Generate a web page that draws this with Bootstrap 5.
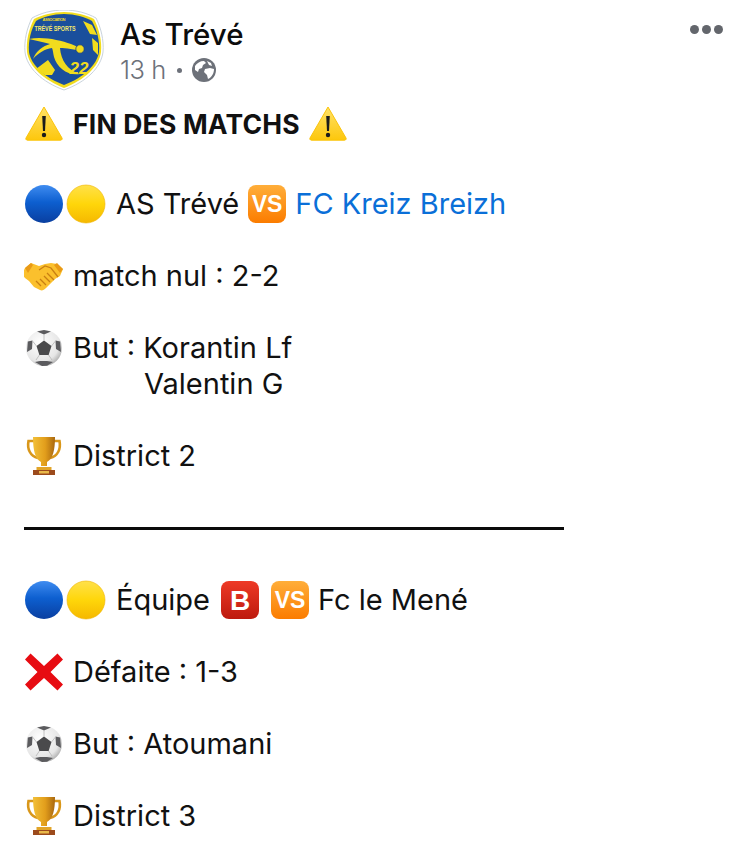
<!DOCTYPE html>
<html lang="fr">
<head>
<meta charset="UTF-8">
<meta name="viewport" content="width=device-width, initial-scale=1.0">
<title>As Trévé</title>
<link href="https://cdn.jsdelivr.net/npm/bootstrap@5.3.0/dist/css/bootstrap.min.css" rel="stylesheet">
<style>
    body {
        background: #fff;
        color: #111;
        font-family: Inter, "Liberation Sans", sans-serif;
        height: 868px;
        overflow: hidden;
    }
    .post-wrap { padding: 10px 24px 0 24px; }
    .post-logo { width: 80px; height: 82px; margin-right: 16px; flex: none; }
    .post-name { font-size: 29.5px; font-weight: 500; line-height: 36px; color: #0c0c0c; margin-top: 6px; }
    .post-meta { font-size: 25.5px; line-height: 32px; color: #6d717a; font-weight: 300; letter-spacing: -.5px; margin-top: 2px; }
    .post-globe { width: 24px; height: 24px; }
    .post-dot { width: 5px; height: 5px; border-radius: 50%; background: #6d717a; margin: 0 10px 0 11px; }
    .post-more { position: absolute; top: 25px; left: 690px; }
    .post-more i { display: block; width: 9px; height: 9px; border-radius: 50%; background: #63666c; margin-right: 3px; }
    .post-body { font-size: 29px; line-height: 36px; font-weight: 400; margin-top: 14px; }
    .post-line { height: 36px; white-space: nowrap; }
    .post-gap { height: 36px; }
    .post-gap-big { height: 44px; }
    .post-title { font-weight: 700; font-size: 26.5px; letter-spacing: .2px; }
    .emo { width: 40px; height: 40px; flex: none; margin-right: 9px; }
    .emo-pair { margin-right: 2px; }
    .emo-second { margin-right: 10px; }
    .emo-in { margin: 0 10px; }
    .emo-vs { margin: 0 8px; }
    .post-link { color: #0a6fd8; text-decoration: none; }
    .post-indent { padding-left: 120px; }
    .post-rule { height: 3px; width: 540px; background: #0b0b0b; }
</style>
</head>
<body>
<svg width="0" height="0" class="d-block">
    <defs>
        <linearGradient id="gBlue" x1="0" y1="0" x2="0" y2="1"><stop offset="0" stop-color="#3f8cf0"/><stop offset=".45" stop-color="#0d5fd0"/><stop offset="1" stop-color="#0a3fa0"/></linearGradient>
        <linearGradient id="gYel" x1="0" y1="0" x2="0" y2="1"><stop offset="0" stop-color="#ffe14a"/><stop offset=".5" stop-color="#ffd60a"/><stop offset="1" stop-color="#f5b800"/></linearGradient>
        <linearGradient id="gOr" x1="0" y1="0" x2="0" y2="1"><stop offset="0" stop-color="#ffae3a"/><stop offset="1" stop-color="#fb7c00"/></linearGradient>
        <linearGradient id="gRed" x1="0" y1="0" x2="0" y2="1"><stop offset="0" stop-color="#ee3a26"/><stop offset="1" stop-color="#bd1a0e"/></linearGradient>
        <linearGradient id="gWarn" x1="0" y1="0" x2="0" y2="1"><stop offset="0" stop-color="#ffe268"/><stop offset="1" stop-color="#fdc70c"/></linearGradient>
        <linearGradient id="gGold" x1="0" y1="0" x2="1" y2="0"><stop offset="0" stop-color="#f2c037"/><stop offset=".55" stop-color="#e29e1c"/><stop offset="1" stop-color="#a9680f"/></linearGradient>
        <radialGradient id="gBall" cx=".4" cy=".35" r=".75"><stop offset="0" stop-color="#fff"/><stop offset=".7" stop-color="#e6e6e6"/><stop offset="1" stop-color="#9a9a9a"/></radialGradient>
        <symbol id="e-blue" viewBox="0 0 40 40"><circle cx="20" cy="20" r="19" fill="url(#gBlue)"/></symbol>
        <symbol id="e-yel" viewBox="0 0 40 40"><circle cx="20" cy="20" r="19" fill="url(#gYel)" stroke="#f0b400" stroke-width=".6"/></symbol>
        <symbol id="e-vs" viewBox="0 0 40 40"><rect x="1" y="1" width="38" height="38" rx="8" fill="url(#gOr)"/><text x="20" y="28" text-anchor="middle" font-family="Liberation Sans, sans-serif" font-weight="700" font-size="23" fill="#fff">VS</text></symbol>
        <symbol id="e-b" viewBox="0 0 40 40"><rect x="1" y="1" width="38" height="38" rx="8" fill="url(#gRed)"/><text x="20" y="30" text-anchor="middle" font-family="Liberation Sans, sans-serif" font-weight="700" font-size="28" fill="#fff">B</text></symbol>
        <symbol id="e-warn" viewBox="0 0 40 40"><path d="M20 3 38 34a1.5 1.5 0 0 1-1.3 2.2H3.3A1.500 1.500 0 0 1 2 34Z" fill="url(#gWarn)" stroke="#fbc40a" stroke-linejoin="round"/><path d="M18.200 12h3.600l-.8 15h-2Z" fill="#1b1b1b"/><circle cx="20" cy="31" r="2.200" fill="#1b1b1b"/></symbol>
        <symbol id="e-ball" viewBox="0 0 40 40"><circle cx="20" cy="20" r="18" fill="url(#gBall)"/><path d="M20 12.500 27.500 18 24.600 27h-9.200L12.500 18Z" fill="#4a4a4c"/><path d="M13 3.500 20 6.500 27 3.500 20 2ZM3.800 13.500 3 24l5-3 .5-8.500ZM36.200 13.500 37 24l-5-3-.5-8.500ZM11 34l7 4 5-.2 6-3.800-6-1h-7Z" fill="#5b5b5e"/><path d="M20 6.500v6M12.500 18 8.500 13M27.500 18l4-5M15.400 27 12 32M24.600 27l3.400 5" stroke="#b5b5b5" stroke-width=".8"/></symbol>
        <symbol id="e-cup" viewBox="0 0 40 40"><path d="M10 5H4.500C3 13 6 20 14 22M30 5h5.500C37 13 34 20 26 22" fill="none" stroke="#d9971a" stroke-width="2.600"/><path d="M9 1h22c0 13-2 22-8 25v4h-6v-4C11 23 9 14 9 1Z" fill="url(#gGold)"/><path d="M12.500 31h15v3h-15Z" fill="#e2a52a"/><path d="M9 34h22v5H9Z" fill="#9c4a1c"/><path d="M15 35h10v2.500H15Z" fill="#e9b94a"/></symbol>
        <symbol id="e-x" viewBox="0 0 40 40"><path d="M6.500 1.500 20 14 33.500 1.500 39 7.500 26.500 20 39 32.500 33.500 38.500 20 26 6.500 38.500 1 32.500 13.500 20 1 7.500Z" fill="#e70c12"/></symbol>
        <symbol id="e-hands" viewBox="0 0 40 40"><path d="M1 12 7 7l8 3 6-2 6-1 6 1 6 5-3 7-5 3-9 9c-2 2-4 3-6 2l-6-3-5-6-4-3-3-4Z" fill="#fbc02d"/><path d="M1 12 7 7l2 2-5 8ZM39 13l-6-6-3 2 6 8Z" fill="#e99a17"/><path d="M15 14l6-4 6 2 7 9M20 20l6 6M16 23l6 6M12 25l5 5M23 17l7 7" fill="none" stroke="#c97f12" stroke-width="1.300"/></symbol>
    </defs>
</svg>

<div class="post-wrap position-relative">
    <div class="d-flex">
        <!-- club crest -->
        <svg class="post-logo" viewBox="0 0 80 82">
            <path d="M40 0C52 0 63 3 72 8 77 18 80 30 79 42 77 58 62 72 40 80 18 72 3 58 1 42 0 30 3 18 8 8 17 3 28 0 40 0Z" fill="#fff" stroke="#c9d3dc" stroke-width="1"/>
            <path d="M40 2C51 2 62 5 70 9 75 19 78 30 77 42 75 57 60 70 40 78 20 70 5 57 3 42 2 30 5 19 10 9 18 5 29 2 40 2Z" fill="#f1dc1e"/>
            <path d="M40 4C51 4 61 7 68 11 73 20 76 31 75 42 73 55 59 68 40 75 21 68 7 55 5 42 4 31 7 20 12 11 19 7 29 4 40 4Z" fill="#1a4f9c"/>
            <path d="M59 11 68 15 73 25 66 24ZM12 59 24 50 31 60 28 65 21 65ZM68 28 74 33 74 45 69 40Z" fill="#f1dc1e"/>
            <path d="M5 29C18 26 36 30 47 34 53 36 57 39 60 42 50 39 42 38 36 38 37 50 43 60 56 64 44 66 33 58 30 47 29 43 29 40 28 38 21 39 14 43 9 49 12 41 19 36 26 34 20 32 12 31 5 29Z" fill="#f1dc1e"/>
            <circle cx="56" cy="39" r="4.200" fill="#f1dc1e" stroke="#173f80" stroke-width=".8"/>
            <text x="30" y="11" text-anchor="middle" font-family="Liberation Sans, sans-serif" font-size="4" font-weight="700" fill="#f1dc1e" textLength="23">ASSOCIATION</text>
            <text x="31" y="21" text-anchor="middle" font-family="Liberation Sans, sans-serif" font-size="7.500" font-weight="700" fill="#f6e96a" textLength="41" lengthAdjust="spacingAndGlyphs">TRÉVÉ SPORTS</text>
            <text x="55" y="64" text-anchor="middle" font-family="Liberation Sans, sans-serif" font-size="17" font-weight="700" font-style="italic" fill="#f1dc1e">22</text>
        </svg>
        <div>
            <div class="post-name">As Trévé</div>
            <div class="post-meta d-flex align-items-center">
                <span>13 h</span><span class="post-dot"></span>
                <svg class="post-globe" viewBox="0 0 24 24">
                    <circle cx="12" cy="12" r="12" fill="#6d7179"/>
                    <path d="M3 8C5 5 8 3 12 3l2 2-3 2-1 3-3 1-1 3-3-2ZM13 11l5-1 4 1c0 4-2 8-6 10l-1-4-3-3ZM15 3l4 2 1 3-3-1Z" fill="#fff"/>
                </svg>
            </div>
        </div>
    </div>
    <div class="post-more d-flex"><i></i><i></i><i></i></div>

    <div class="post-body">
        <div class="post-line post-title d-flex align-items-center"><svg class="emo"><use href="#e-warn"/></svg><span>FIN DES MATCHS</span><svg class="emo ms-2 me-0"><use href="#e-warn"/></svg></div>
        <div class="post-gap-big"></div>
        <div class="post-line d-flex align-items-center"><svg class="emo emo-pair"><use href="#e-blue"/></svg><svg class="emo emo-second"><use href="#e-yel"/></svg><span>AS Trévé</span><svg class="emo emo-vs"><use href="#e-vs"/></svg><a class="post-link" href="#">FC Kreiz Breizh</a></div>
        <div class="post-gap"></div>
        <div class="post-line d-flex align-items-center"><svg class="emo"><use href="#e-hands"/></svg><span>match nul : 2-2</span></div>
        <div class="post-gap"></div>
        <div class="post-line d-flex align-items-center"><svg class="emo"><use href="#e-ball"/></svg><span>But : Korantin Lf</span></div>
        <div class="post-line post-indent">Valentin G</div>
        <div class="post-gap"></div>
        <div class="post-line d-flex align-items-center"><svg class="emo"><use href="#e-cup"/></svg><span>District 2</span></div>
        <div class="post-gap"></div>
        <div class="post-line d-flex align-items-center"><div class="post-rule"></div></div>
        <div class="post-gap"></div>
        <div class="post-line d-flex align-items-center"><svg class="emo emo-pair"><use href="#e-blue"/></svg><svg class="emo emo-second"><use href="#e-yel"/></svg><span>Équipe</span><svg class="emo emo-in"><use href="#e-b"/></svg><svg class="emo me-2"><use href="#e-vs"/></svg><span>Fc le Mené</span></div>
        <div class="post-gap"></div>
        <div class="post-line d-flex align-items-center"><svg class="emo"><use href="#e-x"/></svg><span>Défaite : 1-3</span></div>
        <div class="post-gap"></div>
        <div class="post-line d-flex align-items-center"><svg class="emo"><use href="#e-ball"/></svg><span>But : Atoumani</span></div>
        <div class="post-gap"></div>
        <div class="post-line d-flex align-items-center"><svg class="emo"><use href="#e-cup"/></svg><span>District 3</span></div>
    </div>
</div>
<script src="https://cdn.jsdelivr.net/npm/bootstrap@5.3.0/dist/js/bootstrap.bundle.min.js"></script>
</body>
</html>
